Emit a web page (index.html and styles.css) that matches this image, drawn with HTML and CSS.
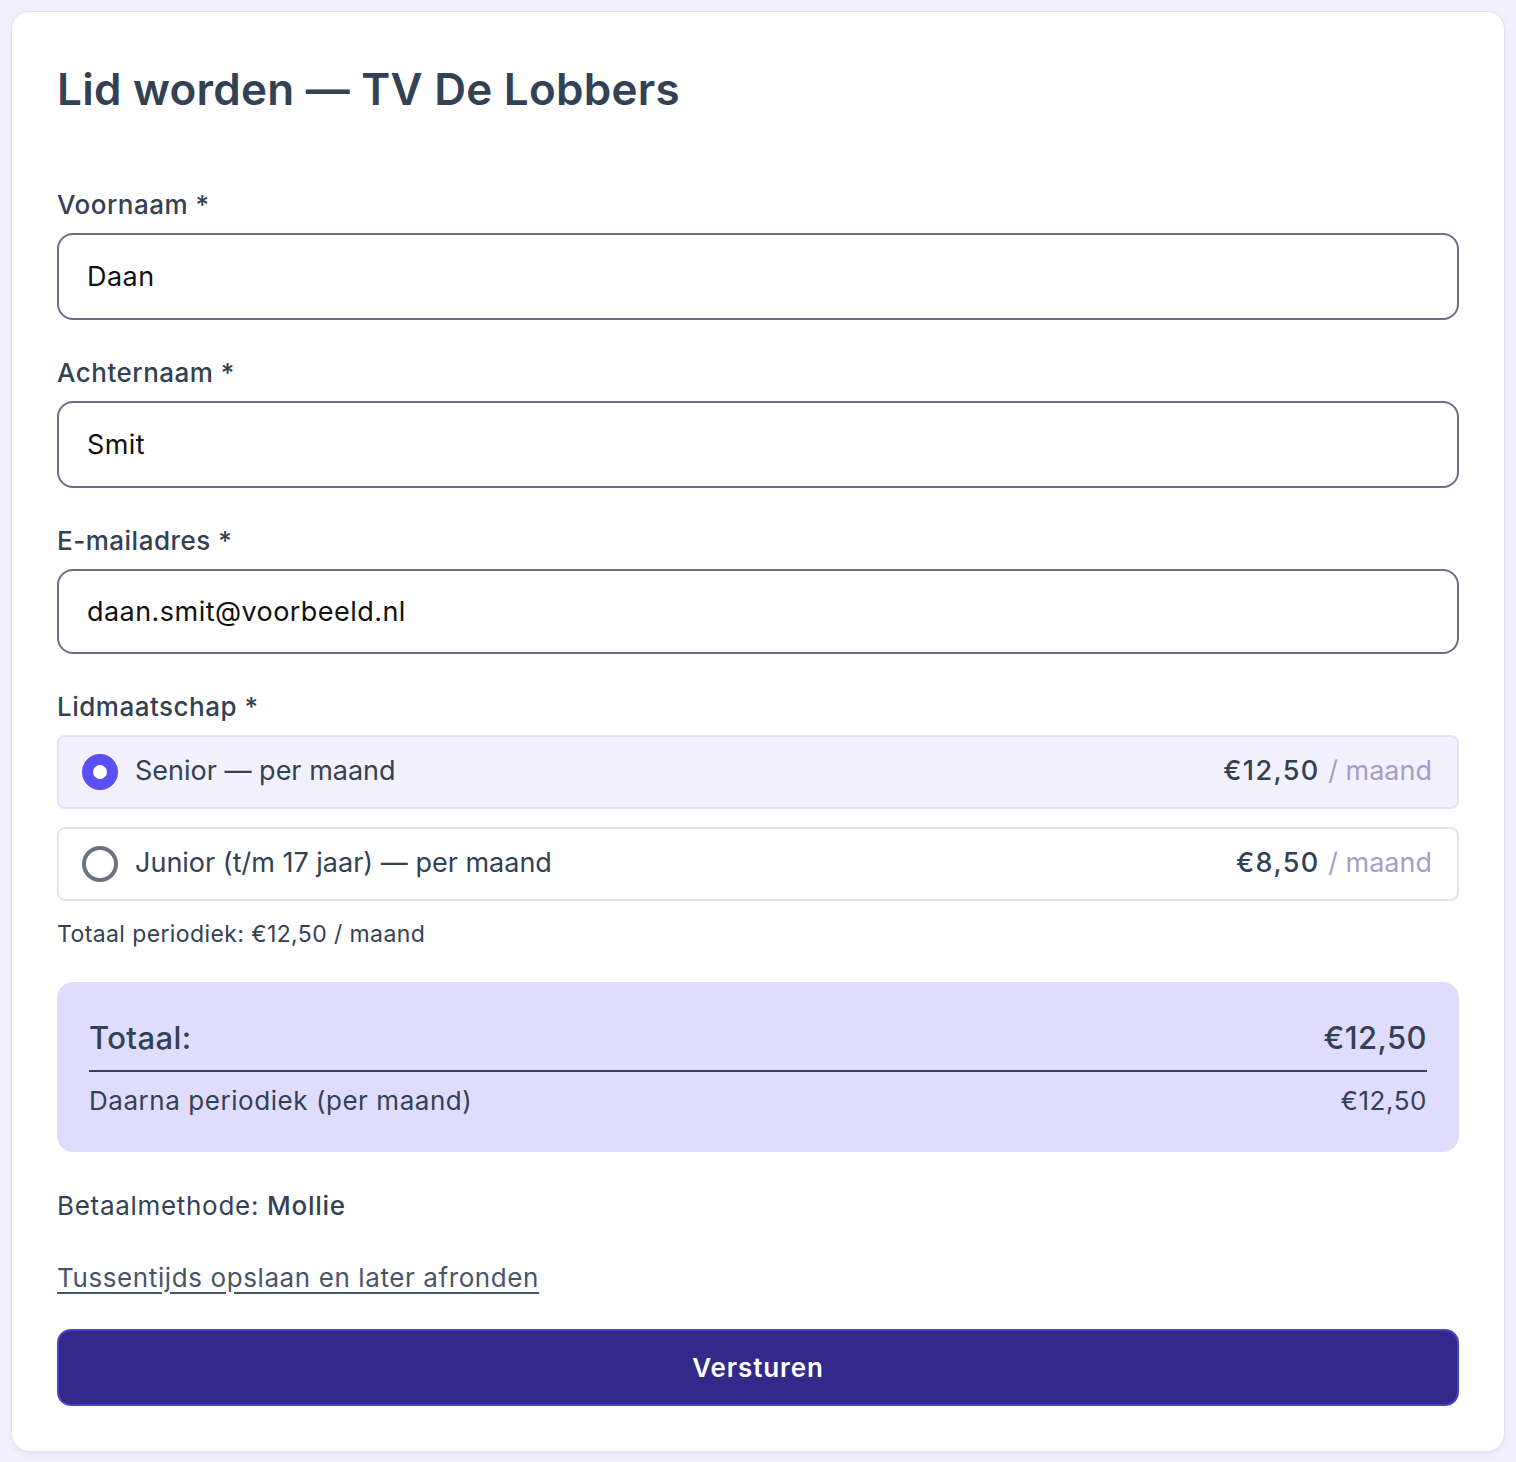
FILE: index.html
```html
<!DOCTYPE html>
<html lang="nl">
<head>
    <meta charset="UTF-8">
    <meta name="viewport" content="width=device-width, initial-scale=1.0">
    <title>Lid worden — TV De Lobbers</title>
    <link rel="stylesheet" href="styles.css">
</head>
<body>

    <!-- aanmeldformulier -->
    <div class="card">
        <h1>Lid worden — TV De Lobbers</h1>

        <form class="signup-form" onsubmit="event.preventDefault()">
            <div class="field">
                <label for="firstname">Voornaam *</label>
                <input type="text" id="firstname" value="Daan" required>
            </div>

            <div class="field">
                <label for="lastname">Achternaam *</label>
                <input type="text" id="lastname" value="Smit" required>
            </div>

            <div class="field">
                <label for="email">E-mailadres *</label>
                <input type="email" id="email" class="email" value="daan.smit@voorbeeld.nl" required>
            </div>

            <!-- lidmaatschap keuze -->
            <div class="field membership">
                <span class="label">Lidmaatschap *</span>
                <label class="option selected">
                    <span class="radio"></span>
                    <span class="option-name">Senior — per maand</span>
                    <span class="option-price">€12,50 <span class="per">/ maand</span></span>
                </label>
                <label class="option">
                    <span class="radio"></span>
                    <span class="option-name">Junior (t/m 17 jaar) — per maand</span>
                    <span class="option-price">€8,50 <span class="per">/ maand</span></span>
                </label>
                <p class="periodic">Totaal periodiek: €12,50 / maand</p>
            </div>

            <!-- totaal overzicht -->
            <div class="summary">
                <div class="summary-row total">
                    <span>Totaal:</span>
                    <span>€12,50</span>
                </div>
                <div class="summary-row">
                    <span>Daarna periodiek (per maand)</span>
                    <span>€12,50</span>
                </div>
            </div>

            <p class="payment">Betaalmethode: <strong>Mollie</strong></p>

            <a href="#" class="save-link">Tussentijds opslaan en later afronden</a>

            <button type="submit">Versturen</button>
        </form>
    </div>

</body>
</html>
```

FILE: styles.css
```css
body {
    font-family: Inter, "Noto Sans", sans-serif;
    margin: 0;
    padding: 11px;
    background-color: #f3f1fd;
    color: #334155;
}

/* kaart */
.card {
    background-color: white;
    border: 1px solid #e2def5;
    border-radius: 18px;
    box-shadow: 0 2px 6px rgba(80, 70, 160, 0.08);
    padding: 51px 45px 45px;
}

.card h1 {
    font-size: 44px;
    font-weight: 600;
    line-height: 1.2;
    letter-spacing: 0.25px;
    margin: 0 0 73px;
    color: #334155;
}

/* velden */
.field {
    margin-bottom: 37px;
}

.field label,
.field .label {
    display: block;
    font-size: 26px;
    font-weight: 500;
    line-height: 1.2;
    letter-spacing: 0.5px;
    margin-bottom: 13px;
}

.field input {
    display: block;
    width: 100%;
    height: 87px;
    box-sizing: border-box;
    border: 2px solid #6e6c8c;
    border-radius: 16px;
    padding: 0 28px;
    font-family: Inter, sans-serif;
    font-size: 27px;
    letter-spacing: 0.45px;
    color: #111;
    background: white;
}

.field input.email {
    height: 85px;
}

/* lidmaatschap */
.membership {
    margin-bottom: 34px;
}

.membership .label {
    margin-bottom: 12px;
}

.field .option {
    display: flex;
    align-items: center;
    height: 74px;
    box-sizing: border-box;
    border: 2px solid #e6e3f7;
    border-radius: 8px;
    padding: 0 25px 0 23px;
    margin-bottom: 18px;
    font-size: 27px;
    font-weight: 400;
    letter-spacing: 0;
    cursor: pointer;
}

.option.selected {
    background-color: #f3f1fe;
}

.radio {
    width: 36px;
    height: 36px;
    box-sizing: border-box;
    border: 4px solid #6b7280;
    border-radius: 50%;
    margin-right: 17px;
    flex-shrink: 0;
}

.option.selected .radio {
    border: 11px solid #5b4ff6;
    background-color: white;
}

.option-name {
    flex: 1;
}

.option-price {
    font-weight: 500;
    letter-spacing: 1.4px;
}

.option-price .per {
    font-weight: 400;
    letter-spacing: 0;
    color: #a59ec6;
}

.periodic {
    font-size: 23px;
    line-height: 1.2;
    letter-spacing: 0.4px;
    margin: 20px 0 0;
}

/* totaal */
.summary {
    background-color: #dfdcfd;
    border-radius: 16px;
    padding: 37px 32px 35px;
}

.summary-row {
    display: flex;
    justify-content: space-between;
    font-size: 26px;
    line-height: 1.2;
    letter-spacing: 0.55px;
}

.summary-row.total {
    font-size: 31px;
    font-weight: 500;
    letter-spacing: 0.4px;
    padding-bottom: 14px;
    border-bottom: 2px solid #334155;
    margin-bottom: 13px;
}

.payment {
    font-size: 26px;
    line-height: 1.2;
    letter-spacing: 0.7px;
    margin: 38px 0 41px;
}

.payment strong {
    font-weight: 500;
}

.save-link {
    display: inline-block;
    font-size: 26px;
    line-height: 1.2;
    letter-spacing: 0.6px;
    color: #475569;
    text-decoration: underline;
    text-underline-offset: 5px;
}

.signup-form button {
    display: block;
    width: 100%;
    height: 77px;
    margin-top: 36px;
    background-color: #312a8a;
    border: 2px solid #4b43c4;
    border-radius: 14px;
    color: white;
    font-family: Inter, sans-serif;
    font-size: 26px;
    font-weight: 600;
    letter-spacing: 0.9px;
    cursor: pointer;
}
```
